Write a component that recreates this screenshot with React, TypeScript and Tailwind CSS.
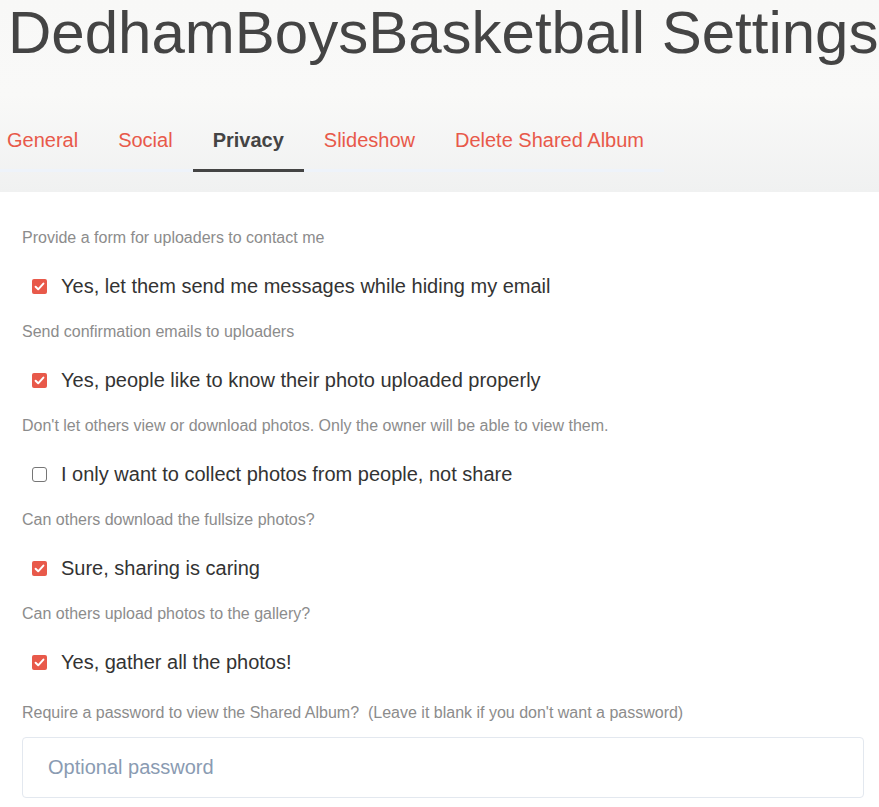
import React, { useState } from "react";

const tabs = ["General", "Social", "Privacy", "Slideshow", "Delete Shared Album"];

type Setting = {
  label: string;
  option: string;
  checked: boolean;
};

const initialSettings: Setting[] = [
  {
    label: "Provide a form for uploaders to contact me",
    option: "Yes, let them send me messages while hiding my email",
    checked: true,
  },
  {
    label: "Send confirmation emails to uploaders",
    option: "Yes, people like to know their photo uploaded properly",
    checked: true,
  },
  {
    label:
      "Don't let others view or download photos. Only the owner will be able to view them.",
    option: "I only want to collect photos from people, not share",
    checked: false,
  },
  {
    label: "Can others download the fullsize photos?",
    option: "Sure, sharing is caring",
    checked: true,
  },
  {
    label: "Can others upload photos to the gallery?",
    option: "Yes, gather all the photos!",
    checked: true,
  },
];

function Checkbox({ checked, onToggle }: { checked: boolean; onToggle: () => void }) {
  if (checked) {
    return (
      <button
        type="button"
        onClick={onToggle}
        className="flex h-[15px] w-[15px] shrink-0 items-center justify-center rounded-[2px] bg-[#e8594a]"
      >
        <svg viewBox="0 0 15 15" className="h-[15px] w-[15px]">
          <path
            d="M3.6 7.8 L6.2 10.3 L11.4 4.6"
            fill="none"
            stroke="#fff"
            strokeWidth="2"
            strokeLinecap="round"
            strokeLinejoin="round"
          />
        </svg>
      </button>
    );
  }
  return (
    <button
      type="button"
      onClick={onToggle}
      className="h-[15px] w-[15px] shrink-0 rounded-[3px] border border-[#767676] bg-white"
    />
  );
}

export default function App() {
  const [active] = useState("Privacy");
  const [settings, setSettings] = useState(initialSettings);
  const [password, setPassword] = useState("");

  return (
    <div className="min-h-[807px] overflow-hidden bg-white font-['Liberation_Sans',Arial,sans-serif]">
      <header className="bg-gradient-to-b from-[#f8f8f7] via-[#f9f9f8] to-[#f0f1f1] pb-[20px]">
        <h1 className="mt-[-3px] whitespace-nowrap pl-[8px] text-[60px] leading-[72px] text-[#444]">
          DedhamBoysBasketball Settings
        </h1>
        <nav className="pt-[58px]">
          <ul className="ml-[-13px] flex">
            {tabs.map((t) => (
              <li key={t}>
                <a
                  href="#"
                  className={
                    t === active
                      ? "block border-b-[3px] border-[#444] px-5 pb-[16px] text-[20px] leading-[26px] font-bold text-[#444]"
                      : "block border-b-[3px] border-[#eef3fa] px-5 pb-[16px] text-[20px] leading-[26px] text-[#e8594a]"
                  }
                >
                  {t}
                </a>
              </li>
            ))}
          </ul>
        </nav>
      </header>

      <main className="px-[22px] pt-[37px]">
        {settings.map((s, i) => (
          <section key={s.label} className={i === settings.length - 1 ? "mb-[29px]" : "mb-[24px]"}>
            <p className="text-[16px] leading-[18px] text-[#8c8c8c]">{s.label}</p>
            <label className="mt-[26px] flex items-center gap-[14px] pl-[10px]">
              <Checkbox
                checked={s.checked}
                onToggle={() =>
                  setSettings((prev) =>
                    prev.map((p, j) => (j === i ? { ...p, checked: !p.checked } : p))
                  )
                }
              />
              <span className="text-[20px] leading-[26px] text-[#333]">{s.option}</span>
            </label>
          </section>
        ))}

        <p className="text-[16px] leading-[18px] whitespace-pre text-[#8c8c8c]">
          {"Require a password to view the Shared Album?  (Leave it blank if you don't want a password)"}
        </p>
        <input
          type="password"
          value={password}
          onChange={(e) => setPassword(e.target.value)}
          placeholder="Optional password"
          className="mt-[15px] h-[61px] w-[842px] rounded-[4px] border border-[#e3e8ef] px-[25px] text-[20px] text-[#333] outline-none placeholder:text-[#8a9bb2]"
        />
      </main>
    </div>
  );
}
